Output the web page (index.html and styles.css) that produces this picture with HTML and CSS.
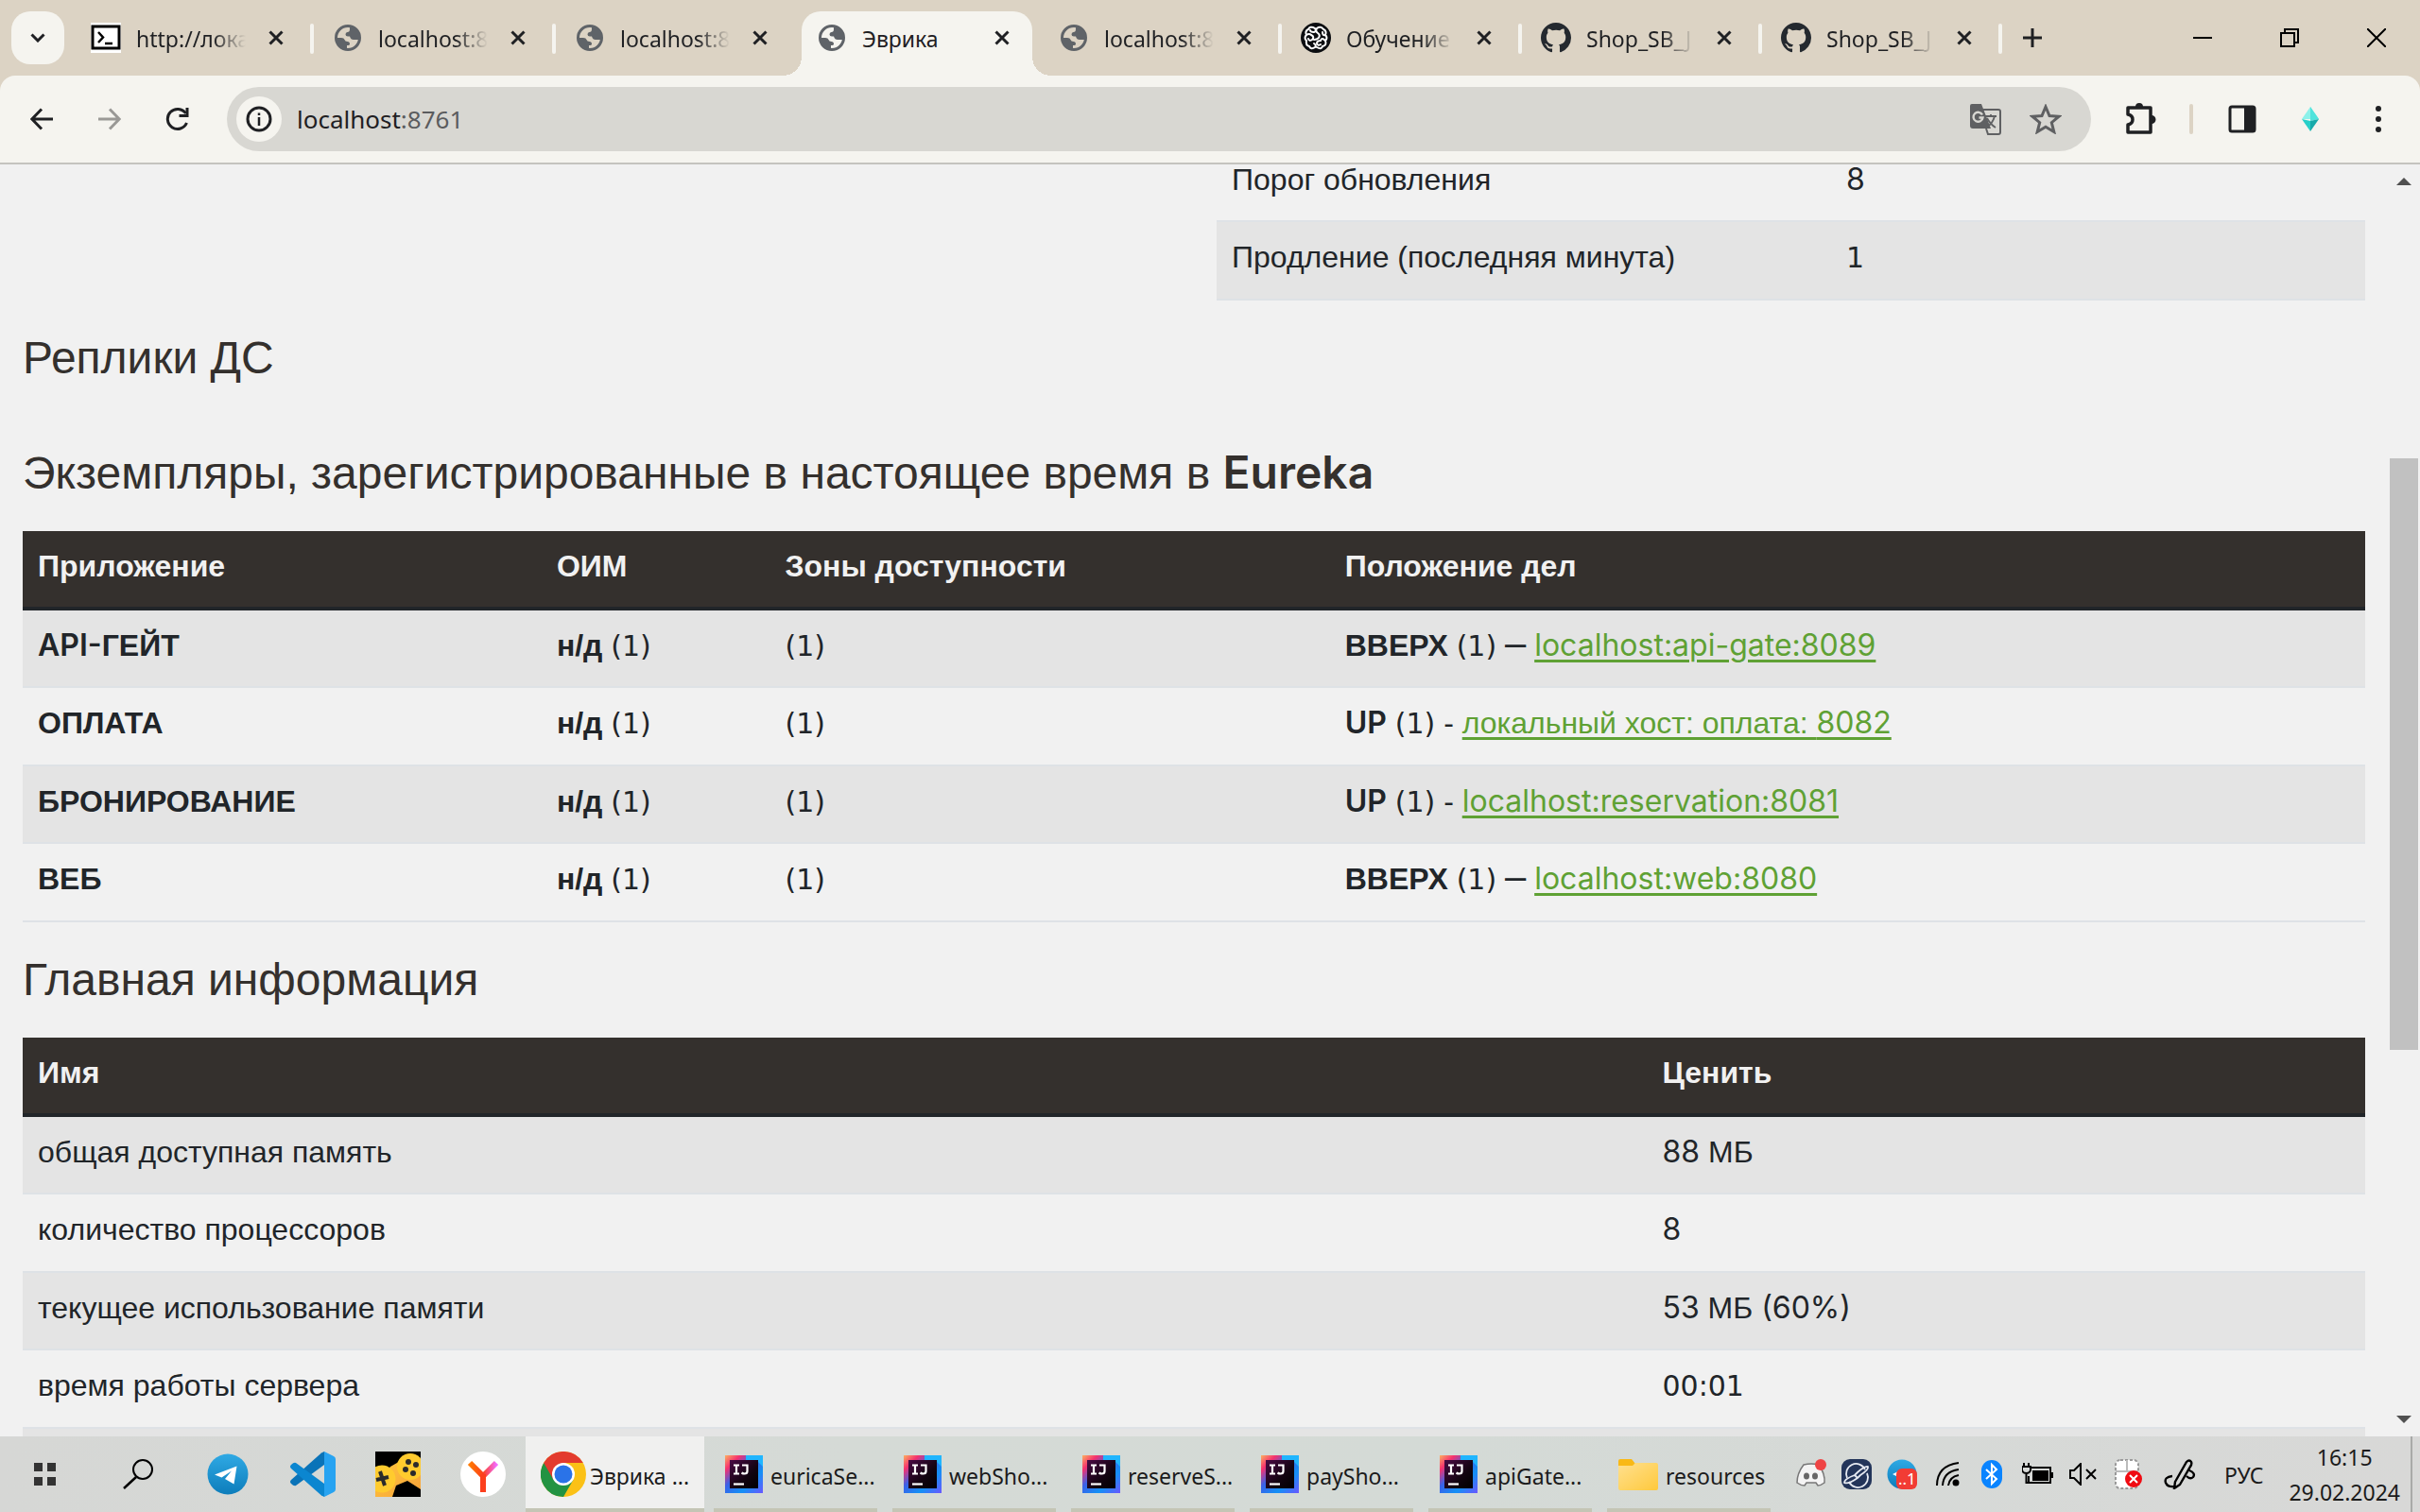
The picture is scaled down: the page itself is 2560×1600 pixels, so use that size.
FILE: index.html
```html
<!DOCTYPE html>
<html lang="ru">
<head>
<meta charset="utf-8">
<title>Эврика</title>
<link rel="stylesheet" href="styles.css">
</head>
<body>
<svg class="defs" aria-hidden="true">
  <defs>
    <symbol id="globe" viewBox="0 0 32 32">
      <circle cx="16" cy="16" r="12.500" fill="none" stroke="#5f6368" stroke-width="3"/>
      <path d="M18 3V7Q18 10 15.500 10Q13.500 10 13.500 12.500Q13.500 14.500 16 14.500H18Q19 18 22 18H29Q30 7 18 3Z" fill="#5f6368"/>
      <path d="M3 16H9Q12 16 12.500 18Q13 20 15.500 20Q18 20 18 22.500Q18 24 15 24V29Q4 28 3 16Z" fill="#5f6368"/>
    </symbol>
    <symbol id="close" viewBox="0 0 16 16"><path d="M1.500 1.500L14.500 14.500M14.500 1.500L1.500 14.500" stroke="#1f2023" stroke-width="3" fill="none"/></symbol>
    <symbol id="github" viewBox="0 0 16 16"><path fill="#24292f" d="M8 0C3.580 0 0 3.580 0 8c0 3.540 2.290 6.530 5.470 7.590.4.070.550-.170.550-.380 0-.190-.010-.820-.010-1.490-2.010.370-2.530-.490-2.690-.940-.090-.230-.480-.940-.820-1.130-.280-.150-.680-.520-.010-.530.630-.010 1.080.580 1.230.820.720 1.210 1.870.870 2.330.660.070-.520.280-.870.510-1.070-1.780-.2-3.640-.890-3.640-3.950 0-.870.310-1.590.820-2.150-.080-.2-.360-1.020.080-2.120 0 0 .670-.210 2.200.820.640-.180 1.320-.270 2-.270s1.360.090 2 .270c1.530-1.040 2.200-.820 2.200-.820.440 1.100.160 1.920.080 2.120.510.560.820 1.270.820 2.150 0 3.070-1.870 3.750-3.650 3.950.290.250.540.730.540 1.480 0 1.070-.010 1.930-.010 2.200 0 .210.150.460.550.380A8.010 8.010 0 0 0 16 8c0-4.420-3.580-8-8-8Z"/></symbol>
    <linearGradient id="tg" x1="0" y1="0" x2="0" y2="1"><stop offset="0" stop-color="#2fa9e4"/><stop offset="1" stop-color="#0d7dbb"/></linearGradient>
    <linearGradient id="ijring" x1="0" y1="0" x2="1" y2="1"><stop offset="0" stop-color="#fdb060"/><stop offset=".2" stop-color="#f5316f"/><stop offset=".42" stop-color="#3a62e8"/><stop offset=".7" stop-color="#1490f5"/><stop offset="1" stop-color="#6b57ff"/></linearGradient>
    <linearGradient id="ijbox" x1="0" y1="0" x2="1" y2="1"><stop offset="0" stop-color="#4a0a45"/><stop offset=".6" stop-color="#120410"/><stop offset="1" stop-color="#000"/></linearGradient>
    <linearGradient id="fold" x1="0" y1="0" x2="1" y2="1"><stop offset="0" stop-color="#ffe08f"/><stop offset="1" stop-color="#ffc93c"/></linearGradient>
    <linearGradient id="yx" x1="0" y1="0" x2="1" y2="0"><stop offset="0" stop-color="#ff7a00"/><stop offset=".5" stop-color="#fc3f1d"/><stop offset="1" stop-color="#f36bff"/></linearGradient>
    <linearGradient id="pad" x1="0" y1="0" x2="1" y2="1"><stop offset="0" stop-color="#ffc93c"/><stop offset="1" stop-color="#f7a13b"/></linearGradient>
    <symbol id="ij" viewBox="0 0 40 40">
      <rect width="40" height="40" fill="url(#ijring)"/>
      <path d="M22 0H40V12L34 6H22Z" fill="#20b5ff"/>
      <rect x="5" y="5" width="30" height="30" fill="url(#ijbox)"/>
      <path d="M9 10.500H15M12 10.500V19.500M9 19.500H15M18 10.500H23.500V17Q23.500 19.500 20.500 19.500Q19 19.500 17.500 18.500" fill="none" stroke="#fff" stroke-width="2.200"/>
      <path d="M9 30.500H20" stroke="#fff" stroke-width="2.200"/>
    </symbol>
  </defs>
</svg>
<div class="window">
  <header class="browser">
    <div class="tabstrip">
      <button class="tabsearch" aria-label="Поиск вкладок"><svg width="16" height="10" viewBox="0 0 16 10"><path d="M1.500 1.500L8 8L14.500 1.500" fill="none" stroke="#1f2023" stroke-width="3"/></svg></button>
      <div class="tabs">
        <div class="tab"><svg class="favicon" viewBox="0 0 32 32"><rect width="32" height="32" fill="#fff"/><rect x="2" y="4" width="28" height="23" fill="#fff" stroke="#000" stroke-width="3"/><path d="M8 10L13 15.500L8 21M15 22H23" fill="none" stroke="#000" stroke-width="2.500"/></svg><span class="title">http://лока</span><button class="x" aria-label="Закрыть"><svg width="16" height="16"><use href="#close"/></svg></button></div>
        <div class="tab"><svg class="favicon"><use href="#globe"/></svg><span class="title">localhost:8</span><button class="x" aria-label="Закрыть"><svg width="16" height="16"><use href="#close"/></svg></button></div>
        <div class="tab plain"><svg class="favicon"><use href="#globe"/></svg><span class="title">localhost:8</span><button class="x" aria-label="Закрыть"><svg width="16" height="16"><use href="#close"/></svg></button></div>
        <div class="tab active"><svg class="favicon"><use href="#globe"/></svg><span class="title">Эврика</span><button class="x" aria-label="Закрыть"><svg width="16" height="16"><use href="#close"/></svg></button></div>
        <div class="tab"><svg class="favicon"><use href="#globe"/></svg><span class="title">localhost:8</span><button class="x" aria-label="Закрыть"><svg width="16" height="16"><use href="#close"/></svg></button></div>
        <div class="tab narrow"><svg class="favicon" viewBox="0 0 32 32"><circle cx="16" cy="16" r="16" fill="#0b0d10"/><g fill="none" stroke="#fff" stroke-width="2" stroke-linecap="round"><path d="M15 6Q10 3 8 7Q4 9 6 13Q3 16 6 19Q5 24 9 25Q11 29 15 26Q17 24 14 22M17 26Q22 29 23 25Q28 24 26 19Q29 16 26 13Q28 9 24 7Q21 3 17 6Q15 9 18 11Q21 13 19 16Q17 18 14 18M15 6Q17 9 14 10Q10 10 10 8M6 13Q9 11 11 13Q15 15 12 18Q9 20 8 17M26 13Q23 14 23 10M26 19Q22 15 21 19Q17 19 17 22Q18 25 21 23"/></g></svg><span class="title">Обучение</span><button class="x" aria-label="Закрыть"><svg width="16" height="16"><use href="#close"/></svg></button></div>
        <div class="tab narrow"><svg class="favicon"><use href="#github"/></svg><span class="title">Shop_SB_J</span><button class="x" aria-label="Закрыть"><svg width="16" height="16"><use href="#close"/></svg></button></div>
        <div class="tab narrow"><svg class="favicon"><use href="#github"/></svg><span class="title">Shop_SB_J</span><button class="x" aria-label="Закрыть"><svg width="16" height="16"><use href="#close"/></svg></button></div>
      </div>
      <button class="newtab" aria-label="Новая вкладка"><svg width="20" height="20" viewBox="0 0 20 20"><path d="M10 0V20M0 10H20" stroke="#1f2023" stroke-width="3"/></svg></button>
      <div class="winctl">
        <button aria-label="Свернуть"><svg width="20" height="20"><path d="M0 10H20" stroke="#000" stroke-width="2"/></svg></button>
        <button aria-label="Восстановить"><svg width="20" height="20"><path d="M1 5H15V19H1ZM5 5V1H19V15H15" fill="none" stroke="#000" stroke-width="2"/></svg></button>
        <button aria-label="Закрыть окно"><svg width="20" height="20"><path d="M0 0L20 20M20 0L0 20" stroke="#000" stroke-width="2"/></svg></button>
      </div>
    </div>
    <div class="toolbar">
      <div class="nav">
        <button aria-label="Назад"><svg width="24" height="24"><path d="M24 12H2M12 1.500L1.800 12L12 22.500" fill="none" stroke="#1f2023" stroke-width="3"/></svg></button>
        <button aria-label="Вперёд"><svg width="24" height="24"><path d="M0 12H22M12 1.500L22.200 12L12 22.500" fill="none" stroke="#9a9996" stroke-width="3"/></svg></button>
        <button aria-label="Обновить"><svg width="26" height="26"><path d="M22.500 17A10.500 10.500 0 1 1 21.500 7" fill="none" stroke="#1f2023" stroke-width="3"/><path d="M24.500 1V11H14.500V8H21.500V1Z" fill="#1f2023"/></svg></button>
      </div>
      <div class="omnibox">
        <button class="info" aria-label="Сведения о сайте"><svg width="28" height="28"><circle cx="14" cy="14" r="12" fill="none" stroke="#1f2023" stroke-width="3"/><path d="M14 12V21M14 7.500V10" stroke="#1f2023" stroke-width="2.500"/></svg></button>
        <span class="url">localhost<span class="port">:8761</span></span>
        <button aria-label="Перевести"><svg width="34" height="34" viewBox="0 0 34 34"><path d="M2 1H13L23 27H4Q1 27 1 24V3Q1 1 3 1Z" fill="#5f6062"/><path d="M15 7H31Q33 7 33 9V31Q33 33 31 33H20L18 27" fill="none" stroke="#5f6062" stroke-width="2"/><path d="M14 12.500A5 5 0 1 0 14.500 15.500H10.500" fill="none" stroke="#d8d7d2" stroke-width="2.400"/><path d="M17 14H29M23 12V14M27 14Q25 22 18 26M19 16Q22 22 28 26" fill="none" stroke="#5f6062" stroke-width="1.800"/></svg></button>
        <button aria-label="В закладки"><svg width="34" height="32" viewBox="0 0 34 32"><path d="M17 3L21 12.500L31 13.200L23.300 19.700L25.800 29.500L17 24.200L8.200 29.500L10.700 19.700L3 13.200L13 12.500Z" fill="none" stroke="#5f6062" stroke-width="3"/></svg></button>
      </div>
      <button class="ext" aria-label="Расширения"><svg width="34" height="34" viewBox="0 0 34 34"><path d="M4 5H28V31H4V23Q9 22 9 17.500Q9 13 4 12Z" fill="none" stroke="#1f2023" stroke-width="3.500" stroke-linejoin="round"/><path d="M12 4A4 4 0 0 1 20 4ZM29 13A4.500 4.500 0 0 1 29 22Z" fill="#1f2023"/></svg></button>
      <span class="rule"></span>
      <div class="actions">
        <button aria-label="Боковая панель"><svg width="30" height="30"><rect x="2" y="2" width="26" height="26" rx="2" fill="none" stroke="#1f2023" stroke-width="3"/><path d="M17 2H28V28H17Z" fill="#1f2023"/></svg></button>
        <button aria-label="Профиль"><svg width="20" height="26" viewBox="0 0 20 26"><path d="M10 0L1 13H19Z" fill="#8cf1ea"/><path d="M10 0L19 13L10 15Z" fill="#4fe3dc"/><path d="M1 13L10 26L10 15Z" fill="#27cfc9"/><path d="M19 13L10 26V15Z" fill="#17aaa9"/></svg></button>
        <button aria-label="Меню"><svg width="6" height="28"><circle cx="3" cy="3" r="3" fill="#1f2023"/><circle cx="3" cy="14" r="3" fill="#1f2023"/><circle cx="3" cy="25" r="3" fill="#1f2023"/></svg></button>
      </div>
    </div>
  </header>
  <div class="viewport">
    <main class="page">
      <table class="data status">
        <colgroup><col class="s1"><col></colgroup>
        <tbody>
          <tr><td>Порог обновления</td><td><span class="lat">8</span></td></tr>
          <tr><td>Продление (последняя минута)</td><td><span class="one">1</span></td></tr>
        </tbody>
      </table>
      <h1>Реплики ДС</h1>
      <h1>Экземпляры, зарегистрированные в настоящее время в <span class="lat strong">Eureka</span></h1>
      <table class="data apps">
        <colgroup><col class="a1"><col class="a2"><col class="a3"><col></colgroup>
        <thead><tr><th>Приложение</th><th>ОИМ</th><th>Зоны доступности</th><th>Положение дел</th></tr></thead>
        <tbody>
          <tr><td><b><span class="lat">API-</span>ГЕЙТ</b></td><td><b>н/д</b> <span class="one">(1)</span></td><td><span class="one">(1)</span></td><td><b>ВВЕРХ</b> <span class="one">(1)</span> <span class="dash">–</span> <a class="lat" href="#api">localhost:api-gate:8089</a></td></tr>
          <tr><td><b>ОПЛАТА</b></td><td><b>н/д</b> <span class="one">(1)</span></td><td><span class="one">(1)</span></td><td><span class="lat strong">UP</span> <span class="one">(1)</span> - <a href="#pay">локальный хост: оплата: <span class="lat">8082</span></a></td></tr>
          <tr><td><b>БРОНИРОВАНИЕ</b></td><td><b>н/д</b> <span class="one">(1)</span></td><td><span class="one">(1)</span></td><td><span class="lat strong">UP</span> <span class="one">(1)</span> - <a class="lat" href="#reservation">localhost:reservation:8081</a></td></tr>
          <tr><td><b>ВЕБ</b></td><td><b>н/д</b> <span class="one">(1)</span></td><td><span class="one">(1)</span></td><td><b>ВВЕРХ</b> <span class="one">(1)</span> <span class="dash">–</span> <a class="lat" href="#web">localhost:web:8080</a></td></tr>
        </tbody>
      </table>
      <h1>Главная информация</h1>
      <table class="data general">
        <colgroup><col class="i1"><col></colgroup>
        <thead><tr><th>Имя</th><th>Ценить</th></tr></thead>
        <tbody>
          <tr><td>общая доступная память</td><td><span class="lat">88</span> МБ</td></tr>
          <tr><td>количество процессоров</td><td><span class="lat">8</span></td></tr>
          <tr><td>текущее использование памяти</td><td><span class="lat">53</span> МБ <span class="lat">(60%)</span></td></tr>
          <tr><td>время работы сервера</td><td><span class="one">00:01</span></td></tr>
          <tr><td></td><td></td></tr>
        </tbody>
      </table>
    </main>
    <div class="scrollbar">
      <svg width="16" height="8"><path d="M0 8L8 0L16 8Z" fill="#505050"/></svg>
      <div class="track"><div class="thumb"></div></div>
      <svg width="16" height="8"><path d="M0 0L8 8L16 0Z" fill="#505050"/></svg>
    </div>
  </div>
  <footer class="taskbar">
    <div class="pins">
      <button class="start" aria-label="Пуск"><svg width="24" height="24"><path d="M0 0H9V9H0ZM14 0H23V9H14ZM0 15H9V24H0ZM14 15H23V24H14Z" fill="#333"/></svg></button>
      <button class="find" aria-label="Поиск"><svg width="32" height="32"><circle cx="21" cy="11" r="10" fill="none" stroke="#000" stroke-width="2"/><path d="M14 19L1 31" stroke="#000" stroke-width="2.500"/></svg></button>
      <button aria-label="Telegram"><svg width="44" height="44"><circle cx="22" cy="22" r="21.500" fill="url(#tg)"/><path d="M8 22.500L31.500 13.500L28.500 32.500L19 27L26 18.500L15.500 25.500Z" fill="#fff"/></svg></button>
      <button aria-label="Visual Studio Code"><svg width="48" height="48" viewBox="0 0 48 48"><path d="M36 0V14L6 36Q4 37 1 34Q-1 32 1 30L33 1.500Z" fill="#0a73b8"/><path d="M36 48V34L6 12Q4 11 1 14Q-1 16 1 18L33 46.500Z" fill="#0b86d0"/><path d="M36 0L46 5Q48 6 48 8V40Q48 42 46 43L36 48Z" fill="#27a3f1"/></svg></button>
      <button aria-label="Игры"><svg width="48" height="48" viewBox="0 0 48 48"><rect width="48" height="48" fill="#000"/><path d="M16 16L30 8L48 22V40L34 31L22 36L18 48H0V34Z" fill="url(#pad)"/><circle cx="7" cy="29" r="14.500" fill="#ffcb2e"/><circle cx="37" cy="16" r="14" fill="#ffcb2e"/><path d="M1 30L14 27M5 21L10 36" stroke="#2b2b2b" stroke-width="4"/><g fill="#2b2b2b"><circle cx="35" cy="11" r="3"/><circle cx="43" cy="14" r="3"/><circle cx="32" cy="19" r="3"/><circle cx="40" cy="23" r="3"/></g></svg></button>
      <button aria-label="Яндекс Браузер"><svg width="48" height="48"><circle cx="24" cy="24" r="24" fill="#fff"/><path d="M10 12L24 26L38 12" fill="none" stroke="url(#yx)" stroke-width="6"/><path d="M24 24V43" stroke="#fc3f1d" stroke-width="6"/></svg></button>
    </div>
    <div class="apps-open">
      <button class="app current"><svg width="48" height="48" viewBox="0 0 48 48"><circle cx="24" cy="24" r="24" fill="#fbc116"/><path d="M24 24L3.200 12A24 24 0 0 0 24 48L34.400 30Z" fill="#229342"/><path d="M3.200 12A24 24 0 0 1 44.800 12H24L13.600 30Z" fill="#e33b2e"/><circle cx="24" cy="24" r="12" fill="#fff"/><circle cx="24" cy="24" r="9.500" fill="#2a73e8"/></svg><span>Эврика ...</span></button>
      <button class="app"><svg width="40" height="40"><use href="#ij"/></svg><span>euricaSe...</span></button>
      <button class="app"><svg width="40" height="40"><use href="#ij"/></svg><span>webSho...</span></button>
      <button class="app"><svg width="40" height="40"><use href="#ij"/></svg><span>reserveS...</span></button>
      <button class="app"><svg width="40" height="40"><use href="#ij"/></svg><span>paySho...</span></button>
      <button class="app"><svg width="40" height="40"><use href="#ij"/></svg><span>apiGate...</span></button>
      <button class="app"><svg width="42" height="34"><path d="M0 3Q0 1 2 1H14L18 6H40V12H0Z" fill="#f9b916"/><path d="M0 8H15L18 5H40Q42 5 42 7V32Q42 34 40 34H2Q0 34 0 32Z" fill="url(#fold)"/></svg><span>resources</span></button>
    </div>
    <div class="tray">
      <button aria-label="Discord"><svg width="32" height="32" viewBox="0 0 32 32"><path d="M8 6Q16 4 24 6Q31 16 30 25Q26 28 23 28L21 25H11L9 28Q5 28 1 25Q1 15 8 6Z" fill="#f4f4f4" stroke="#777" stroke-width="1.500"/><ellipse cx="11" cy="18" rx="3" ry="3.500" fill="#666"/><ellipse cx="20" cy="18" rx="3" ry="3.500" fill="#666"/><circle cx="26" cy="6" r="6" fill="#ef4444"/></svg></button>
      <button aria-label="Планета"><svg width="32" height="32" viewBox="0 0 32 32"><rect width="32" height="32" rx="9" fill="#23355a"/><path d="M25 11A10.500 10.500 0 1 0 6 20M8 24A10.500 10.500 0 0 0 27 15" fill="none" stroke="#e6eaf2" stroke-width="1.800"/><path d="M3 25Q3 21 14 17L17 14Q25 7 28 8Q29 11 20 17L17 20Q7 27 3 25ZM14 17L17 20" fill="none" stroke="#e6eaf2" stroke-width="1.800"/></svg></button>
      <button aria-label="Telegram"><svg width="32" height="32" viewBox="0 0 32 32"><circle cx="16" cy="16" r="15.500" fill="url(#tg)"/><path d="M6 16L12 13V19Z" fill="#fff"/><rect x="10" y="10" width="22" height="22" rx="6" fill="#f23c34"/><text x="12" y="27" class="badge">..1</text></svg></button>
      <button aria-label="Wi-Fi"><svg width="26" height="26" viewBox="0 0 26 26"><circle cx="22" cy="22" r="3.500" fill="#000"/><path d="M2 25Q2 4 25 1M8 25Q9 10 25 8M14 25Q15 16 25 14" fill="none" stroke="#000" stroke-width="2"/></svg></button>
      <button aria-label="Bluetooth"><svg width="24" height="30" viewBox="0 0 24 30"><rect width="22" height="30" rx="11" fill="#0a84ff"/><path d="M5 10L16 20L11 25V5L16 10L5 20" fill="none" stroke="#fff" stroke-width="2"/></svg></button>
      <button aria-label="Батарея"><svg width="34" height="24" viewBox="0 0 34 24"><path d="M10 5H30V21H7V14" fill="none" stroke="#000" stroke-width="2"/><path d="M11 8H28V19H11ZM31 10H33V16H31Z" fill="#000"/><path d="M2 0V4M7 0V4M0 4H9V8Q8 11 4.500 11Q1 11 0 8ZM4.500 11V21H8" fill="none" stroke="#000" stroke-width="2"/></svg></button>
      <button aria-label="Звук выключен"><svg width="30" height="24" viewBox="0 0 30 24"><path d="M1 8H5L12 1V23L5 16H1ZM18 7L28 17M28 7L18 17" fill="none" stroke="#000" stroke-width="2"/></svg></button>
      <button aria-label="Устройство"><svg width="30" height="32" viewBox="0 0 30 32"><rect x="1" y="1" width="24" height="30" rx="5" fill="#fff" stroke="#999" stroke-width="2" stroke-dasharray="3 2"/><path d="M13 1V13M1 13H25" stroke="#bbb" stroke-width="2"/><circle cx="20" cy="21" r="9" fill="#f00b12"/><path d="M16 17L24 25M24 17L16 25" stroke="#fff" stroke-width="2"/></svg></button>
      <button class="pen" aria-label="Перо"><svg width="34" height="32" viewBox="0 0 34 32"><path d="M12 24L24 3Q27 0 29 3Q30 5 28 8L17 27L11 31ZM9 18Q0 19 2 25Q4 30 11 29M27 12Q34 15 31 19Q28 22 24 18" fill="none" stroke="#000" stroke-width="2.400"/></svg></button>
    </div>
    <span class="lang">РУС</span>
    <div class="clock"><time>16:15</time><time>29.02.2024</time></div>
    <span class="peek"></span>
  </footer>
</div>
</body>
</html>
```
FILE: styles.css
```css
* { box-sizing: border-box; }
body { margin: 0; background: #f1f1f1; color: #212529; font-family: "Liberation Sans", sans-serif; }
button { border: 0; padding: 0; margin: 0; background: none; color: inherit; font: inherit; display: flex; align-items: center; justify-content: center; flex: none; }
svg { display: block; flex: none; }
.defs { position: absolute; width: 0; height: 0; }
.window { display: flex; flex-direction: column; height: 100vh; overflow: hidden; }

/* Tab strip */
.browser { flex: none; background: #dcd3c4; font-family: "Noto Sans", sans-serif; color: #1f2023; border-bottom: 2px solid #c4c3bf; }
.tabstrip { display: flex; height: 80px; padding-left: 12px; }
.tabsearch { width: 56px; height: 56px; border-radius: 20px; background: #f5f4ef; margin-top: 12px; }
.tabs { display: flex; margin-left: 8px; }
.tab { position: relative; display: flex; align-items: center; gap: 16px; width: 256px; padding-left: 20px; font-size: 23px; }
.tab.narrow { width: 254px; }
.tab.narrow .title { width: 114px; }
.tab::after { content: ""; position: absolute; right: 0; top: 25px; width: 4px; height: 32px; border-radius: 2px; background: #f5f4ef; }
.tab.plain::after { display: none; }
.favicon { width: 32px; height: 32px; }
.title { width: 116px; flex: none; padding-top: 2px; white-space: nowrap; line-height: 32px; -webkit-mask-image: linear-gradient(90deg, #000 70%, transparent); mask-image: linear-gradient(90deg, #000 70%, transparent); }
.x { width: 32px; height: 32px; }
.tab.active { isolation: isolate; }
.tab.active .title { -webkit-mask-image: none; mask-image: none; }
.tab.active::before { content: ""; position: absolute; z-index: -1; left: 4px; right: 8px; top: 12px; bottom: 0; border-radius: 20px 20px 0 0; background: #f5f4ef; }
.tab.active::after { z-index: -1; left: -16px; right: -12px; top: auto; bottom: 0; width: auto; height: 20px; border-radius: 0; background: radial-gradient(circle at 0 0, transparent 20px, #f5f4ef 20px) left / 20px 20px no-repeat, radial-gradient(circle at 100% 0, transparent 20px, #f5f4ef 20px) right / 20px 20px no-repeat; }
.newtab { width: 64px; }
.winctl { display: flex; margin-left: auto; }
.winctl button { width: 92px; }

/* Address bar */
.toolbar { display: flex; align-items: center; height: 92px; background: #f5f4ef; border-radius: 16px 16px 0 0; padding-left: 8px; }
.nav { display: flex; }
.nav button { width: 72px; height: 56px; }
.omnibox { flex: 1; display: flex; align-items: center; height: 68px; margin-left: 16px; padding: 0 31px 0 10px; border-radius: 34px; background: #d8d7d2; gap: 30px; }
.info { width: 48px; height: 48px; border-radius: 50%; background: #f5f4ef; }
.url { flex: 1; margin-left: -14px; font-size: 26px; line-height: 40px; }
.port { color: #5b5c5e; }
.ext { width: 72px; margin-left: 16px; }
.rule { width: 4px; height: 32px; border-radius: 2px; background: #dcd3c4; margin: 0 16px; }
.actions { display: flex; padding-right: 8px; }
.actions button { width: 72px; height: 56px; }

/* Page, scrolled part of the way down */
.viewport { flex: 1; min-height: 0; display: flex; overflow: hidden; }
.page { flex: 1; display: flex; flex-direction: column; margin-top: -21px; padding: 0 24px; }
h1 { margin: 32px 0; font-size: 48px; line-height: 58px; font-weight: 400; color: #34302d; flex: none; }
.lat { font-family: Inter, sans-serif; line-height: 1; }
.one { font-family: "DejaVu Sans", sans-serif; font-size: 30px; line-height: 1; }
.dash { font-size: 40px; line-height: 1; }
.strong { font-weight: 600; }
b { font-weight: 700; }
b .lat { font-weight: 600; }
.data { width: 100%; table-layout: fixed; border-collapse: separate; border-spacing: 0; font-size: 32px; line-height: 48px; flex: none; }
.data td, .data th { padding: 13px 16px 0; height: 82px; text-align: left; vertical-align: top; border-bottom: 2px solid #dee2e6; white-space: nowrap; }
.data th { height: 84px; background: #34302d; color: #f1f1f1; border-bottom: 4px solid #212529; }
.data tbody tr:nth-child(odd) td { background: #e4e4e4; }
.data tbody tr:nth-child(even) td { height: 83px; }
.data.status tbody tr:nth-child(odd) td { background: none; }
.data.status tbody tr:nth-child(even) td { background: #e4e4e4; }
.status { width: 49%; align-self: flex-end; }
.data.status { width: 49.03%; }
.s1 { width: 53.5%; }
.a1 { width: 22.15%; }
.a2 { width: 9.75%; }
.a3 { width: 23.9%; }
.i1 { width: 69.35%; }
a { color: #5fa134; text-decoration-thickness: 3px; text-underline-offset: 4px; }

.scrollbar { width: 34px; flex: none; display: flex; flex-direction: column; align-items: center; padding: 14px 0; background: #f1f1f1; }
.track { flex: 1; align-self: stretch; padding: 289px 2px 0; }
.thumb { height: 626px; background: #c1c1c1; }

/* Taskbar */
.taskbar { flex: none; display: flex; align-items: stretch; height: 80px; background: linear-gradient(90deg, #d6d7d5, #d5dad6 35%, #d4dad6 60%, #d8d8d7); font-family: "Noto Sans", sans-serif; font-size: 23px; color: #1b1b1b; }
.pins { display: flex; }
.pins button { width: 90px; }
.pins .start { width: 96px; }
.pins .find { width: 100px; }
.apps-open { display: flex; gap: 16px; }
.app { width: 173px; justify-content: flex-start; gap: 8px; padding: 4px 0 0 12px; border-bottom: 4px solid #c4c5b5; white-space: nowrap; }
.app span { padding-top: 3px; }
.app.current { width: 189px; gap: 4px; padding-left: 16px; background: #f0f0ef; margin-right: -6px; }
.tray { display: flex; margin-left: auto; }
.tray button { width: 48px; }
.tray .pen { width: 60px; }
.badge { font-size: 17px; fill: #fff; }
.lang { align-self: center; margin: 0 27px 0 17px; padding-top: 2px; }
.clock { display: flex; flex-direction: column; justify-content: center; align-items: center; line-height: 37px; padding-top: 2px; }
.peek { width: 10px; border-left: 2px solid #a9aaa8; margin-left: 11px; }
```
